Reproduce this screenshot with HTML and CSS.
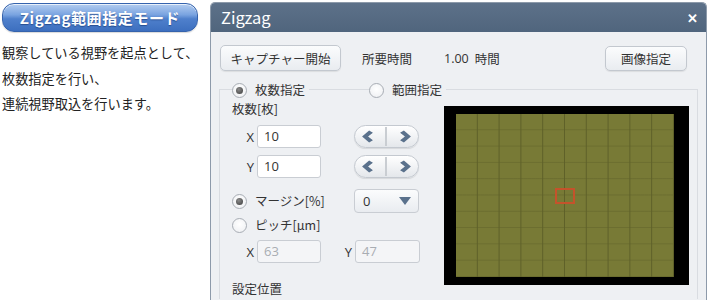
FILE: index.html
```html
<!doctype html>
<html lang="ja">
  <head>
    <meta charset="UTF-8" />
    <title>Zigzag範囲指定モード</title>
    <link rel="stylesheet" href="styles.css">
  </head>
  <body>
    <div class="intro">
      <div class="mode-pill">Zigzag範囲指定モード</div>
      <p class="intro-text">観察している視野を起点として、<br>枚数指定を行い、<br>連続視野取込を行います。</p>
    </div>

    <div class="dialog">
      <div class="dialog-title">
        <span>Zigzag</span>
        <span class="close">✕</span>
      </div>

      <div class="dialog-body">
        <div class="toolbar">
          <button class="btn btn-capture">キャプチャー開始</button>
          <span class="time-label">所要時間</span>
          <span class="time-value">1.00</span>
          <span class="time-unit">時間</span>
          <button class="btn btn-image">画像指定</button>
        </div>

        <div class="group">
          <div class="mode-row">
            <label class="radio checked"><span class="dot"></span>枚数指定</label>
            <label class="radio"><span class="dot"></span>範囲指定</label>
          </div>

          <div class="group-grid">
            <div class="settings">
              <div class="caption">枚数[枚]</div>

              <div class="field-row row-x">
                <span class="axis">X</span>
                <span class="input">10</span>
                <span class="pager">
                  <svg width="13" height="13" viewBox="0 0 12 12"><path d="M7.5 0.5 L11 2.5 L6.5 6 L11 9.5 L7.5 11.5 L1 6 Z" fill="#5a718c"/></svg>
                  <span class="divider"></span>
                  <svg width="13" height="13" viewBox="0 0 12 12"><path d="M4.5 0.5 L1 2.5 L5.5 6 L1 9.5 L4.5 11.5 L11 6 Z" fill="#5a718c"/></svg>
                </span>
              </div>

              <div class="field-row row-y">
                <span class="axis">Y</span>
                <span class="input">10</span>
                <span class="pager">
                  <svg width="13" height="13" viewBox="0 0 12 12"><path d="M7.5 0.5 L11 2.5 L6.5 6 L11 9.5 L7.5 11.5 L1 6 Z" fill="#5a718c"/></svg>
                  <span class="divider"></span>
                  <svg width="13" height="13" viewBox="0 0 12 12"><path d="M4.5 0.5 L1 2.5 L5.5 6 L1 9.5 L4.5 11.5 L11 6 Z" fill="#5a718c"/></svg>
                </span>
              </div>

              <div class="option-row row-margin">
                <label class="radio checked"><span class="dot"></span>マージン[%]</label>
                <span class="select">0
                  <svg width="12" height="8" viewBox="0 0 12 8"><path d="M0 0 H12 L6 8 Z" fill="#5a718c"/></svg>
                </span>
              </div>

              <div class="option-row row-pitch">
                <label class="radio"><span class="dot"></span>ピッチ[μm]</label>
              </div>

              <div class="field-row row-pitch-xy">
                <span class="axis">X</span>
                <span class="input disabled">63</span>
                <span class="axis axis-y">Y</span>
                <span class="input disabled">47</span>
              </div>

              <div class="caption caption-pos">設定位置</div>
            </div>

            <div class="preview">
              <div class="preview-area">
                <div class="preview-mark"></div>
              </div>
            </div>
          </div>
        </div>
      </div>
    </div>
  </body>
</html>
```

FILE: styles.css
```css
* {
  margin: 0;
  padding: 0;
  box-sizing: border-box;
}

html,
body {
  height: 300px;
  overflow: hidden;
}

body {
  display: flex;
  align-items: flex-start;
  background: #ffffff;
  color: #222;
  font-family: 'Noto Sans CJK JP', 'Noto Sans', sans-serif;
}

/* Left intro column */
.intro {
  width: 210px;
  flex-shrink: 0;
  padding: 3px 0 0 2px;
}

.mode-pill {
  width: 196px;
  height: 29px;
  border-radius: 12px;
  border: 1px solid #3563ad;
  background: linear-gradient(180deg, #b3cdf0 0%, #79a3e0 40%, #4f80cc 55%, #3d6fbf 100%);
  box-shadow: inset 0 1px 0 rgba(255, 255, 255, 0.7), 0 1px 1px rgba(0, 0, 0, 0.15);
  color: #fff;
  font-size: 15px;
  font-weight: 700;
  letter-spacing: 0.6px;
  line-height: 27px;
  text-align: center;
  text-shadow: 0 1px 1px rgba(20, 50, 110, 0.6);
}

.intro-text {
  margin-top: 8px;
  font-size: 13.2px;
  line-height: 25.5px;
  color: #222;
}

/* Dialog */
.dialog {
  width: 497px;
  height: 298px;
  margin-top: 2px;
  border: 1px solid #8d9aaa;
  border-bottom: none;
  border-radius: 5px 5px 0 0;
  background: #eef0f3;
  overflow: hidden;
}

.dialog-title {
  height: 29px;
  display: flex;
  align-items: center;
  justify-content: space-between;
  padding: 0 8px 0 10px;
  background: linear-gradient(180deg, #5d7189 0%, #50657d 100%);
  color: #fff;
  font-size: 16.5px;
  line-height: 29px;
}

.close {
  font-size: 13px;
  font-weight: 700;
}

.dialog-body {
  padding: 13px 8px 0 8px;
  font-size: 12.5px;
  color: #333;
}

.toolbar {
  display: flex;
  align-items: center;
  height: 26px;
  padding-right: 11px;
}

.btn {
  height: 26px;
  border: 1px solid #c3c8cf;
  border-radius: 5px;
  background: linear-gradient(180deg, #fbfcfd 0%, #e9ecf0 100%);
  box-shadow: 0 1px 1px rgba(0, 0, 0, 0.08);
  font-family: inherit;
  font-size: 12.5px;
  color: #333;
}

.btn-capture {
  width: 121px;
  margin-left: 1px;
}

.btn-image {
  width: 82px;
  height: 25px;
  margin-left: auto;
}

.time-label {
  margin-left: 21px;
}

.time-value {
  margin-left: 32px;
  font-family: 'Open Sans', 'Noto Sans', sans-serif;
  font-size: 12.5px;
}

.time-unit {
  margin-left: 6px;
}

/* Group box */
.group {
  margin-top: 18px;
  border: 1px solid #d9dce1;
  border-bottom: none;
  height: 210px;
  padding: 0 8px 0 12px;
}

.mode-row {
  display: flex;
  height: 18px;
  margin-top: -9px;
}

.radio {
  display: flex;
  align-items: center;
  gap: 8px;
  height: 18px;
  padding-right: 4px;
  background: #eef0f3;
  line-height: 18px;
}

.mode-row .radio + .radio {
  margin-left: 60px;
}

.dot {
  width: 15px;
  height: 15px;
  border-radius: 50%;
  border: 1px solid #a8adb4;
  background: radial-gradient(circle at 50% 40%, #ffffff 0%, #eceef1 100%);
  display: flex;
  align-items: center;
  justify-content: center;
}

.radio.checked .dot::after {
  content: '';
  width: 7px;
  height: 7px;
  border-radius: 50%;
  background: radial-gradient(circle at 40% 35%, #8a8a8a 0%, #3c3c3c 100%);
}

.group-grid {
  display: grid;
  grid-template-columns: 212px 245px;
}

.settings {
  display: flex;
  flex-direction: column;
}

.caption {
  margin-top: 2px;
  height: 16px;
  line-height: 16px;
}

.caption-pos {
  margin-top: 18px;
}

.field-row {
  display: flex;
  align-items: center;
  height: 23px;
}

.row-x {
  margin-top: 8px;
}

.row-y {
  margin-top: 7px;
}

.row-pitch-xy {
  margin-top: 6px;
}

.axis {
  width: 12px;
  margin: 0 3px 0 10px;
  text-align: right;
  font-family: 'Open Sans', 'Noto Sans', sans-serif;
  font-size: 13px;
}

.axis-y {
  margin-left: 19px;
}

.input {
  width: 64px;
  height: 23px;
  border: 1px solid #c9cdd3;
  border-radius: 3px;
  background: #fff;
  padding-left: 6px;
  line-height: 21px;
  font-family: 'Open Sans', 'Noto Sans', sans-serif;
  font-size: 13px;
  color: #333;
}

.input.disabled {
  background: #f4f5f7;
  color: #a9adb3;
}

.row-pitch-xy .input + .axis + .input {
  width: 65px;
}

.pager {
  display: flex;
  align-items: center;
  justify-content: space-around;
  width: 65px;
  height: 23px;
  margin-left: 33px;
  border: 1px solid #c4c9d0;
  border-radius: 12px;
  background: linear-gradient(180deg, #ffffff 0%, #e4e7eb 100%);
  box-shadow: 0 1px 1px rgba(0, 0, 0, 0.1);
}

.divider {
  width: 2px;
  height: 19px;
  background: #c9cdd2;
}

.option-row {
  display: flex;
  align-items: center;
}

.row-margin {
  margin-top: 11px;
  height: 24px;
}

.row-pitch {
  margin-top: 3px;
  height: 18px;
}

.select {
  display: flex;
  align-items: center;
  justify-content: space-between;
  width: 65px;
  height: 24px;
  margin-left: auto;
  margin-right: 25px;
  padding: 0 7px 0 8px;
  border: 1px solid #c9cdd3;
  border-radius: 4px;
  background: linear-gradient(180deg, #fbfcfd 0%, #e9ecf0 100%);
  font-family: 'Open Sans', 'Noto Sans', sans-serif;
  font-size: 13px;
}

/* Preview */
.preview {
  margin-top: 7px;
  width: 245px;
  height: 179px;
  padding: 8px 15px 8px 12px;
  background: #000;
}

.preview-area {
  position: relative;
  width: 218px;
  height: 163px;
  background-color: #787a36;
  background-image:
    linear-gradient(90deg, #5e6029 1px, transparent 1px),
    linear-gradient(180deg, rgba(94, 96, 41, 0.5) 1px, transparent 1px);
  background-size: 21.8px 16.3px;
  background-position: -1px -1px;
}

.preview-mark {
  position: absolute;
  left: 99px;
  top: 74px;
  width: 20px;
  height: 16px;
  border: 2px solid #c4532b;
}
```
